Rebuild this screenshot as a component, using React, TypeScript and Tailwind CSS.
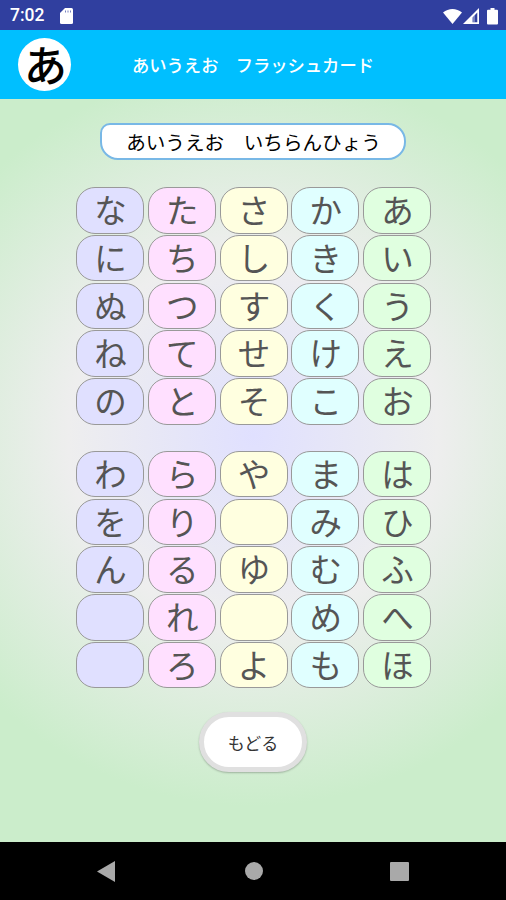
const TOP_ROWS = ["なたさかあ", "にちしきい", "ぬつすくう", "ねてせけえ", "のとそこお"];
const BOTTOM_ROWS = ["わらやまは", "をり　みひ", "んるゆむふ", "　れ　めへ", "　ろよもほ"];

const COLUMN_COLORS = ["bg-[#e0e0ff]", "bg-[#ffe0ff]", "bg-[#ffffe0]", "bg-[#e0ffff]", "bg-[#e0ffe0]"];

function KanaTable({ rows }: { rows: string[] }) {
  return (
    <div className="grid w-[355px] grid-cols-5 gap-x-[3.75px] gap-y-[1.2px]">
      {rows.flatMap((row, r) =>
        [...row].map((kana, c) => (
          <div
            key={`${r}-${c}`}
            className={`flex h-[46.6px] items-center justify-center rounded-[19px] border border-[#999] pl-px text-[32.5px] font-normal leading-none text-[#555] ${COLUMN_COLORS[c]}`}
          >
            <span className="pb-[2px]">{kana.trim()}</span>
          </div>
        )),
      )}
    </div>
  );
}

function StatusBar() {
  return (
    <div className="flex h-[30px] items-center bg-[#303f9f] pl-[10px] pr-[8px] pt-[2px] text-white">
      <span className="w-[50px] font-[Roboto] text-[17.5px] font-medium leading-none">7:02</span>
      <svg width="13" height="16" viewBox="0 0 13 16" className="-mt-px" fill="currentColor">
        <path d="M5 0h6.500A1.500 1.500 0 0 1 13 1.500v13a1.500 1.500 0 0 1-1.500 1.500h-10A1.500 1.500 0 0 1 0 14.500V5z" />
        <path d="M5.500 2.500v2M8 2.500v2M10.500 2.500v2" stroke="#303f9f" strokeWidth="1" opacity=".65" />
      </svg>
      <div className="ml-auto flex items-center">
        <svg width="19" height="17" viewBox="0 0 19 17" fill="currentColor">
          <path d="M0 4.500C5.500-.3 13.500-.3 19 4.500L9.500 16z" />
        </svg>
        <svg width="16" height="17" viewBox="0 0 16 17" className="ml-[1px]" fill="currentColor">
          <path fillRule="evenodd" d="M16 0v16H0zM14.300 4.500L9.500 9.500V14.300h4.800z" />
          <path d="M9.500 9.500v4.800h2.500v-7.500z" opacity=".35" />
        </svg>
        <svg width="11" height="17" viewBox="0 0 11 17" className="ml-[8px]" fill="currentColor">
          <path d="M3.500 0h4v1.800H10a1 1 0 0 1 1 1V15.500a1 1 0 0 1-1 1H1a1 1 0 0 1-1-1V2.800a1 1 0 0 1 1-1h2.500z" />
        </svg>
      </div>
    </div>
  );
}

export default function App() {
  return (
    <div
      lang="ja"
      className="flex h-[900px] w-[506px] flex-col overflow-hidden bg-[radial-gradient(circle_370px_at_253px_436px,#e0e0ff_0%,#eeeeee_50%,#cbedcb_100%)] font-['Noto_Sans_CJK_JP',sans-serif]"
    >
      <StatusBar />
      <header className="flex h-[69px] shrink-0 items-center bg-[#00bfff] pl-[18px]">
        <div className="flex size-[53px] items-center justify-center rounded-full bg-white text-[43px] font-medium leading-none text-black">
          <span className="pb-[2px] pl-[2px]">あ</span>
        </div>
        <h1 className="ml-[61px] whitespace-nowrap text-[17.3px] font-medium leading-none text-white">
          あいうえお　フラッシュカード
        </h1>
      </header>
      <main className="flex flex-1 flex-col items-center">
        <h2 className="mt-[24px] flex h-[37px] w-[306px] items-center justify-center whitespace-nowrap rounded-[18px] rounded-tl-[10px] border-2 border-[#78b8e6] bg-white pl-px text-[19.6px] font-normal leading-none text-black">
          あいうえお　いちらんひょう
        </h2>
        <div className="ml-px mt-[27px] flex flex-col gap-[26px]">
          <KanaTable rows={TOP_ROWS} />
          <KanaTable rows={BOTTOM_ROWS} />
        </div>
        <button className="mt-[24px] flex h-[60px] w-[108px] items-center justify-center rounded-full border-[5px] border-[#e0e0e0] bg-white text-[17px] font-normal leading-none text-[#333] shadow-[0_1px_2px_rgba(0,0,0,0.25)]">
          もどる
        </button>
      </main>
      <nav className="flex h-[58px] shrink-0 items-center bg-black text-[#a9a9a9]">
        <svg width="18" height="21" viewBox="0 0 18 21" className="ml-[97px]" fill="currentColor">
          <path d="M18 0v21L0 10.500z" />
        </svg>
        <div className="ml-[130px] size-[18px] rounded-full bg-current" />
        <div className="ml-[127px] size-[19px] rounded-[1px] bg-current" />
      </nav>
    </div>
  );
}
